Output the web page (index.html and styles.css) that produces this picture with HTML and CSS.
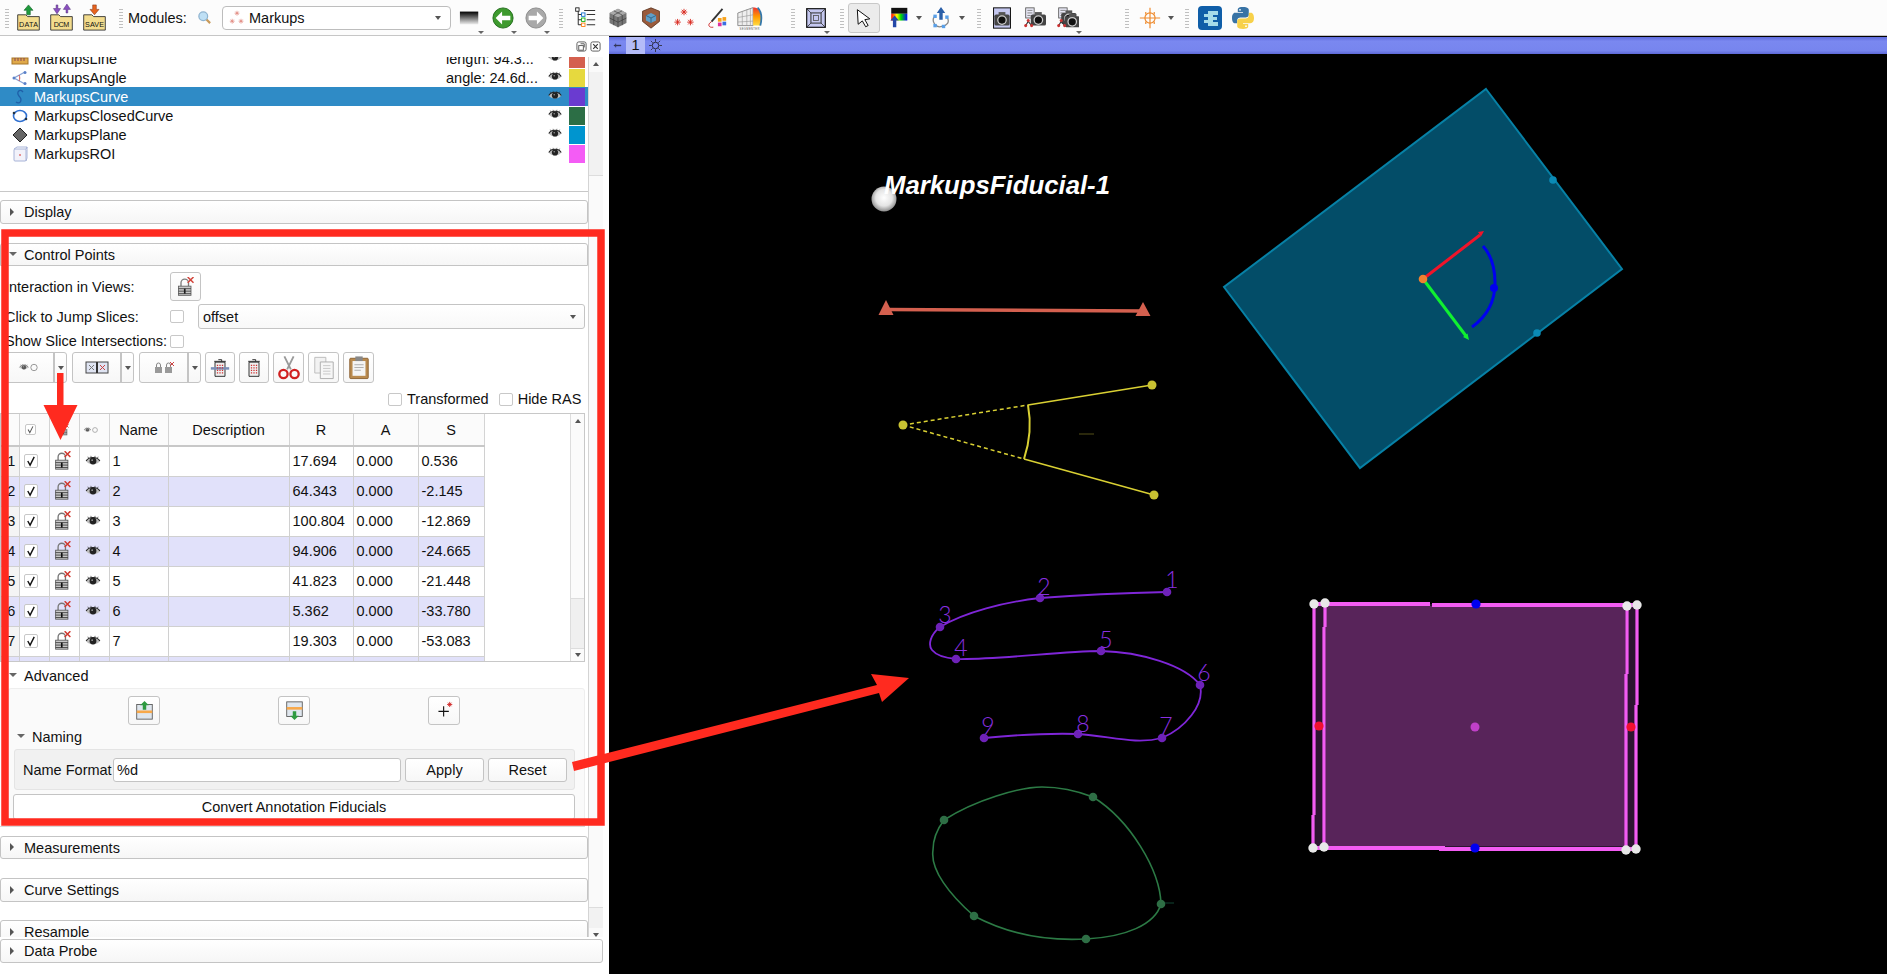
FILE: index.html
```html
<!DOCTYPE html>
<html lang="en">
<head>
    <meta charset="UTF-8">
    <title>3D Slicer - Markups</title>
    <link rel="stylesheet" href="styles.css">
</head>
<body>
    <!-- shared icon shapes -->
    <svg class="defs" width="0" height="0">
        <defs>
            <linearGradient id="gradBlack" x1="0" y1="0" x2="0" y2="1">
                <stop offset="0" stop-color="#000"/><stop offset="1" stop-color="#eee"/>
            </linearGradient>
            <linearGradient id="gradRainbow" x1="0" y1="0" x2="1" y2="0">
                <stop offset="0" stop-color="#f00"/><stop offset=".35" stop-color="#ff0"/><stop offset=".6" stop-color="#0d0"/><stop offset="1" stop-color="#00f"/>
            </linearGradient>
            <linearGradient id="gradMesh" x1="0" y1="0" x2="0" y2="1">
                <stop offset="0" stop-color="#e33"/><stop offset=".5" stop-color="#f90"/><stop offset="1" stop-color="#fd4"/>
            </linearGradient>
            <g id="eye">
                <path d="M1 7C4 2 14 2 17 7C14 12 4 12 1 7z" fill="#bbb"/>
                <path d="M1 7C4 1.500 14 1.500 17 7" fill="none" stroke="#222" stroke-width="1.300"/>
                <path d="M4 4L3 2M7 3L6.500 1M11 3L11.500 1M14 4L15 2" stroke="#333" stroke-width=".8"/>
                <circle cx="9" cy="7" r="4" fill="#222"/>
                <circle cx="8" cy="6" r="1" fill="#999"/>
            </g>
            <g id="lockx">
                <path d="M5 11V7a4.500 4.500 0 0 1 9 0v4" fill="none" stroke="#777" stroke-width="1.600"/>
                <rect x="2" y="11" width="15" height="11" fill="#c8c8c8" stroke="#555"/>
                <path d="M2 14h15M2 17h15M2 20h15" stroke="#333"/>
                <path d="M9.500 14v6" stroke="#111" stroke-width="2"/>
                <path d="M13 0l7 7M20 0l-7 7" stroke="#d03a30" stroke-width="1.800"/>
            </g>
            <g id="check">
                <path d="M3 6.500L5.500 11L10 2" fill="none" stroke="#111" stroke-width="1.500"/>
            </g>
            <g id="camera">
                <rect x="3" y="8" width="18" height="13" rx="2" fill="#444"/>
                <rect x="8" y="5" width="8" height="4" fill="#555"/>
                <circle cx="12" cy="14.500" r="5" fill="#111" stroke="#ccc" stroke-width="1.500"/>
            </g>
            <g id="nodes">
                <path d="M5 17L2 22M5 17L9 22" stroke="#333" stroke-width="1.200"/>
                <circle cx="5" cy="16" r="1.800" fill="#c33"/>
                <circle cx="2" cy="22" r="1.800" fill="#c33"/>
                <circle cx="9" cy="22" r="1.800" fill="#c33"/>
            </g>
            <g id="eyeOff">
                <use href="#eye" transform="translate(1 2.500) scale(.55)" opacity=".75"/>
                <circle cx="16" cy="6.500" r="3.200" fill="none" stroke="#999"/>
            </g>
        </defs>
    </svg>

    <div class="app">
        <header class="toolbar">
            <span class="grip"></span>
            <span class="tool tool-lg">
                <svg viewBox="0 0 30 30"><path d="M15 1l5 6h-3v5h-4V7h-3z" fill="#1f9a3c" stroke="#0c5a20" stroke-width=".6"/><path d="M3 12h9l2 2h13v15H3z" fill="#f3dc8d" stroke="#333"/><text x="15" y="25.500" class="ico-text" textLength="21">DATA</text></svg>
            </span>
            <span class="tool tool-lg">
                <svg viewBox="0 0 30 30"><path d="M9 1v4h-3l4 6 4-6h-3V1zM20 10V6h-3l4-6 4 6h-3v4z" fill="#8a4fc0" stroke="#4d2a70" stroke-width=".5"/><path d="M3 12h9l2 2h13v15H3z" fill="#f3dc8d" stroke="#333"/><text x="15" y="25.500" class="ico-text" textLength="17">DCM</text></svg>
            </span>
            <span class="tool tool-lg">
                <svg viewBox="0 0 30 30"><path d="M13 1h4v5h3l-5 6-5-6h3z" fill="#e8641e" stroke="#803010" stroke-width=".6"/><path d="M3 12h9l2 2h13v15H3z" fill="#f3dc8d" stroke="#333"/><text x="15" y="25.500" class="ico-text" textLength="21">SAVE</text></svg>
            </span>
            <span class="grip grip-mods"></span>
            <span class="mods-label">Modules:</span>
            <span class="tool tool-sm">
                <svg viewBox="0 0 24 24"><path d="M14 14l7 7" stroke="#c89a5a" stroke-width="3.500"/><circle cx="10" cy="10" r="7" fill="#bfe0f5" stroke="#8fb4d0" stroke-width="2"/></svg>
            </span>
            <div class="mods-combo">
                <svg class="mods-icon" viewBox="0 0 20 20"><g stroke="#e0857a" stroke-width=".9"><path d="M10 1v6M7 4h6M8 2l4 4M12 2l-4 4"/><path d="M4 11v6M1 14h6M2 12l4 4M6 12l-4 4"/><path d="M15 11v6M12 14h6M13 12l4 4M17 12l-4 4"/></g></svg>
                <span class="combo-text">Markups</span>
                <span class="tri-down"></span>
            </div>
            <span class="tool tool-gap menu">
                <svg viewBox="0 0 24 24"><rect x="1" y="5" width="20" height="14" fill="url(#gradBlack)"/></svg>
            </span>
            <span class="tool menu">
                <svg viewBox="0 0 24 24"><circle cx="12" cy="12" r="11" fill="#3e9a2e" stroke="#1f6a18"/><path d="M4 12l7-7v4.500h9v5h-9V19z" fill="#fff"/></svg>
            </span>
            <span class="tool menu">
                <svg viewBox="0 0 24 24"><circle cx="12" cy="12" r="11" fill="#a9a9a9" stroke="#888"/><path d="M20 12l-7-7v4.500H4v5h9V19z" fill="#fff"/></svg>
            </span>
            <span class="grip grip-tree"></span>
            <span class="tool">
                <svg viewBox="0 0 26 26"><path d="M5 3v18M5 9h5M5 15h5M5 21h5M12 4h13M15 9h10M15 15h10M15 21h10" stroke="#333" stroke-width="1.200"/><rect x="2" y="1" width="4" height="4" fill="#fff" stroke="#111"/><rect x="9" y="7" width="4" height="4" fill="#fff" stroke="#06c"/><rect x="9" y="13" width="4" height="4" fill="#fff" stroke="#0a0"/><rect x="9" y="19" width="4" height="4" fill="#fff" stroke="#f70"/></svg>
            </span>
            <span class="tool">
                <svg viewBox="0 0 26 26"><path d="M13 2l10 5v12l-10 5-10-5V7z" fill="#777"/><path d="M13 2l10 5-10 5-10-5z" fill="#aaa"/><path d="M13 12v12M8 4.500l10 5M18 4.500l-10 5M8 9.500v12M18 9.500v12M3 13l10 5 10-5" stroke="#333" stroke-width=".7" fill="none"/></svg>
            </span>
            <span class="tool">
                <svg viewBox="0 0 26 26"><path d="M13 1l10 4v12l-10 8-10-8V5z" fill="#9a5b3c" stroke="#5e3622"/><path d="M13 7l6 3v6l-6 3-6-3v-6z" fill="#5f9fc8"/><path d="M13 13l6-3M13 13l-6-3M13 13v6" stroke="#2e5f80"/></svg>
            </span>
            <span class="tool">
                <svg viewBox="0 0 24 24"><g stroke="#d9271e" stroke-width="1"><path d="M12 2v7M8.500 5.500h7M9.500 3l5 5M14.500 3l-5 5"/><path d="M5 13v7M1.500 16.500h7M2.500 14l5 5M7.500 14l-5 5"/><path d="M19 13v7M15.500 16.500h7M16.500 14l5 5M21.500 14l-5 5"/></g></svg>
            </span>
            <span class="tool">
                <svg viewBox="0 0 24 24"><path d="M18 2L6 16" stroke="#333" stroke-width="2"/><path d="M6 16C1 19 3 23 8 22" fill="none" stroke="#c22" stroke-width="1"/><rect x="13" y="12" width="4" height="4" fill="#f7a21b"/><rect x="18" y="11" width="4" height="4" fill="#f7a21b"/><rect x="13" y="17" width="4" height="4" fill="#e0309c"/><rect x="18" y="16" width="4" height="4" fill="#3a6ee0"/></svg>
            </span>
            <span class="tool tool-lg">
                <svg viewBox="0 0 30 30"><path d="M2 10l17-6v20H2z" fill="#eee" stroke="#888"/><path d="M2 15l17-3M2 20l17-1M7 8v16M12 6v18M16 5v19" stroke="#999" stroke-width=".7"/><path d="M19 4C27 2 29 14 27 24h-8z" fill="url(#gradMesh)"/><path d="M24 4c4 4 5 12 3 20" stroke="#37a" stroke-width="2" fill="none"/><text x="15" y="29" class="ico-tiny" textLength="22">SEGMENTER</text></svg>
            </span>
            <span class="grip grip-layout"></span>
            <span class="tool menu">
                <svg viewBox="0 0 26 26"><rect x="2" y="2" width="22" height="22" fill="#c5c8f0" stroke="#111" stroke-width="1.400"/><rect x="7" y="7" width="12" height="12" fill="none" stroke="#333" stroke-width="1.200"/><rect x="10" y="10" width="6" height="6" fill="none" stroke="#555"/><path d="M2 2l5 5M24 2l-5 5M2 24l5-5M24 24l-5-5" stroke="#333"/></svg>
            </span>
            <span class="grip grip-pointer"></span>
            <span class="tool-on">
                <svg viewBox="0 0 24 24"><path d="M4 2l15 11-6 1 4 7-3 1.500-4-7-5 4z" fill="#fff" stroke="#111" stroke-width="1.200"/></svg>
            </span>
            <span class="tool">
                <svg viewBox="0 0 26 26"><rect x="5" y="1" width="19" height="7" fill="#111"/><rect x="5" y="8" width="19" height="8" fill="url(#gradRainbow)"/><path d="M9 10l5 6h-3v8H7v-8H4z" fill="#2448a8"/></svg>
            </span>
            <span class="tri-down tool-drop"></span>
            <span class="tool">
                <svg viewBox="0 0 26 26"><path d="M6 10C0 18 8 25 14 23C20 22 24 18 20 12" fill="none" stroke="#888" stroke-width="1.500"/><path d="M13 0l5 7h-3v8h-4V7H8z" fill="#2a5fa8"/><g fill="#5aa0e8"><rect x="4" y="9" width="4" height="4"/><rect x="18" y="10" width="4" height="4"/><rect x="4" y="20" width="4" height="4"/><rect x="14" y="21" width="4" height="4"/></g></svg>
            </span>
            <span class="tri-down tool-drop"></span>
            <span class="grip grip-cam"></span>
            <span class="tool">
                <svg viewBox="0 0 24 26"><rect x="2" y="1" width="20" height="24" fill="#c5c8f0" stroke="#111" stroke-width="1.200"/><use href="#camera" y="1"/></svg>
            </span>
            <span class="tool">
                <svg viewBox="0 0 26 26"><rect x="2" y="1" width="10" height="12" fill="#e8e8f5" stroke="#555"/><path d="M4 4h6M4 7h6M4 10h4" stroke="#777"/><use href="#camera" x="5" y="1"/><use href="#nodes"/></svg>
            </span>
            <span class="tool menu">
                <svg viewBox="0 0 26 26"><rect x="2" y="1" width="10" height="12" fill="#e8e8f5" stroke="#555"/><path d="M4 4h6M4 7h6M4 10h4" stroke="#777"/><use href="#camera" x="2" y="-1"/><use href="#camera" x="6" y="3"/><use href="#nodes"/></svg>
            </span>
            <span class="grip grip-cross"></span>
            <span class="tool">
                <svg viewBox="0 0 26 26"><g fill="none" stroke="#ee8a2c" stroke-width="1.400"><circle cx="13" cy="13" r="6"/><path d="M13 1v24M1 13h24M8 6v3M18 6v3M8 17v3M18 17v3"/></g></svg>
            </span>
            <span class="tri-down tool-drop"></span>
            <span class="grip grip-ext"></span>
            <span class="tool tool-mid">
                <svg viewBox="0 0 24 24"><rect x="0" y="0" width="24" height="24" rx="4" fill="#0f5ea8"/><path d="M10 5h10v4h-5v2h4v3h-4v2h5v4H10v-3H6v-3h4v-3H6V8h4z" fill="#a5dbe8"/></svg>
            </span>
            <span class="tool tool-mid">
                <svg viewBox="0 0 24 24"><path d="M11.900 1C6.500 1 6.800 3.400 6.800 3.400V6h5.200v.8H4.700S1 6.300 1 11.900s3.200 5.400 3.200 5.400h2v-2.600s-.1-3.200 3.200-3.200h5.400s3 0 3-2.900V3.900S18.300 1 11.900 1z" fill="#3873a5"/><path d="M12.100 23c5.400 0 5.100-2.400 5.100-2.400V18H12v-.8h7.300s3.700.5 3.700-5.100-3.200-5.400-3.200-5.400h-2v2.600s.1 3.200-3.200 3.200H9.200s-3 0-3 2.900v4.700S5.700 23 12.100 23z" fill="#f7d14a"/><circle cx="9" cy="3.800" r=".9" fill="#fff"/><circle cx="15" cy="20.200" r=".9" fill="#fff"/></svg>
            </span>
        </header>

        <main class="workspace">
            <section class="panel">
                <div class="panel-head">
                    <span class="dock-btn">
                        <svg viewBox="0 0 12 12"><rect x="1" y="1" width="10" height="10" rx="2" fill="none" stroke="#555"/><rect x="3" y="5" width="5" height="5" fill="none" stroke="#555"/><path d="M5 3h4v4" fill="none" stroke="#555"/></svg>
                    </span>
                    <span class="dock-btn">
                        <svg viewBox="0 0 12 12"><rect x="1" y="1" width="10" height="10" rx="2" fill="none" stroke="#555"/><path d="M3.500 3.500l5 5M8.500 3.500l-5 5" stroke="#333" stroke-width="1.200"/></svg>
                    </span>
                </div>

                <div class="panel-body">
                    <div class="panel-scroll">
                        <div class="node-list">
                            <div class="node-rows">
                                <div class="node-row">
                                    <svg class="node-icon" viewBox="0 0 18 16"><rect x="1" y="7" width="16" height="6" fill="#e0a94a" stroke="#a87628"/><path d="M4 7v3M7 7v3M10 7v3M13 7v3" stroke="#845"/></svg>
                                    <span class="node-name">MarkupsLine</span>
                                    <span class="node-info">length: 94.3...</span>
                                    <svg class="node-eye" viewBox="0 0 18 14"><use href="#eye"/></svg>
                                    <span class="swatch swatch-line"></span>
                                </div>
                                <div class="node-row">
                                    <svg class="node-icon" viewBox="0 0 18 16"><path d="M14 2L3 8l11 6" fill="none" stroke="#8aa6d8" stroke-width="1.400"/><circle cx="14" cy="2.500" r="1.500" fill="#5a80c8"/><circle cx="3" cy="8" r="1.500" fill="#5a80c8"/><circle cx="14" cy="13.500" r="1.500" fill="#5a80c8"/><path d="M8 5c1 2 1 4 0 6" fill="none" stroke="#d05050"/></svg>
                                    <span class="node-name">MarkupsAngle</span>
                                    <span class="node-info">angle: 24.6d...</span>
                                    <svg class="node-eye" viewBox="0 0 18 14"><use href="#eye"/></svg>
                                    <span class="swatch swatch-angle"></span>
                                </div>
                                <div class="node-row node-row-on">
                                    <svg class="node-icon" viewBox="0 0 18 16"><path d="M12 3C9 -1 5 3 8 7C12 11 9 16 5 13" fill="none" stroke="#1f5fa8" stroke-width="1.300"/></svg>
                                    <span class="node-name">MarkupsCurve</span>
                                    <svg class="node-eye" viewBox="0 0 18 14"><use href="#eye"/></svg>
                                    <span class="swatch swatch-curve"></span>
                                </div>
                                <div class="node-row">
                                    <svg class="node-icon" viewBox="0 0 18 16"><ellipse cx="9" cy="8" rx="6.500" ry="5.500" fill="none" stroke="#2e6fd0" stroke-width="1.600"/><circle cx="3" cy="5" r="1.300" fill="#234"/><circle cx="15" cy="11" r="1.300" fill="#234"/></svg>
                                    <span class="node-name">MarkupsClosedCurve</span>
                                    <svg class="node-eye" viewBox="0 0 18 14"><use href="#eye"/></svg>
                                    <span class="swatch swatch-closed"></span>
                                </div>
                                <div class="node-row">
                                    <svg class="node-icon" viewBox="0 0 18 16"><path d="M9 1l7 7-7 7-7-7z" fill="#666" stroke="#222"/></svg>
                                    <span class="node-name">MarkupsPlane</span>
                                    <svg class="node-eye" viewBox="0 0 18 14"><use href="#eye"/></svg>
                                    <span class="swatch swatch-plane"></span>
                                </div>
                                <div class="node-row">
                                    <svg class="node-icon" viewBox="0 0 18 16"><rect x="3" y="3" width="12" height="12" rx="1" fill="#f2f2fa" stroke="#a8b4d8"/><path d="M3 3l3-2h10l-1 2M15 3l1-2v11l-1 3" fill="none" stroke="#a8b4d8"/><circle cx="9" cy="9" r="1" fill="#e07070"/></svg>
                                    <span class="node-name">MarkupsROI</span>
                                    <svg class="node-eye" viewBox="0 0 18 14"><use href="#eye"/></svg>
                                    <span class="swatch swatch-roi"></span>
                                </div>
                            </div>
                        </div>
                        <div class="splitter"></div>

                        <div class="section-btn"><span class="tri-right"></span>Display</div>

                        <div class="section-btn section-open"><span class="tri-open"></span>Control Points</div>
                        <div class="section-frame">
                            <div class="form-row row-interact">
                                <span class="form-label">Interaction in Views:</span>
                                <span class="push-btn push-lock">
                                    <svg class="lock-icon" viewBox="0 0 22 24"><use href="#lockx"/></svg>
                                </span>
                            </div>
                            <div class="form-row row-jump">
                                <span class="form-label">Click to Jump Slices:</span>
                                <span class="box"></span>
                                <div class="offset-combo">offset<span class="tri-down"></span></div>
                            </div>
                            <div class="form-row row-show">
                                <span class="form-label">Show Slice Intersections:</span>
                                <span class="box"></span>
                            </div>
                            <div class="btn-row">
                                <span class="split">
                                    <svg class="split-icon" viewBox="0 0 24 13"><use href="#eyeOff"/></svg>
                                    <span class="split-arrow"><span class="tri-down"></span></span>
                                </span>
                                <span class="split">
                                    <svg class="split-icon" viewBox="0 0 24 13"><rect x="1" y="1" width="22" height="11" fill="#dfe4f2" stroke="#444"/><path d="M12 1v11" stroke="#333" stroke-width="2"/><path d="M4 4l5 5M9 4l-5 5" stroke="#777"/><path d="M15 4l5 5M20 4l-5 5" stroke="#c44"/></svg>
                                    <span class="split-arrow"><span class="tri-down"></span></span>
                                </span>
                                <span class="split">
                                    <svg class="split-icon" viewBox="0 0 24 13"><rect x="3" y="6" width="7" height="6" fill="#999"/><path d="M4.500 6V4a2 2 0 0 1 4 0v2" fill="none" stroke="#888"/><rect x="13" y="6" width="7" height="6" fill="#999"/><path d="M14.500 6V4a2 2 0 0 1 4 0v2" fill="none" stroke="#888"/><path d="M18 1l4 4M22 1l-4 4" stroke="#c44"/></svg>
                                    <span class="split-arrow"><span class="tri-down"></span></span>
                                </span>
                                <span class="push-btn push-trash">
                                    <svg viewBox="0 0 24 24"><path d="M6 5h12v17H6z" fill="#eee" stroke="#111"/><path d="M5 4h14M10 2h4v2" stroke="#111" fill="none"/><rect x="1" y="11" width="22" height="3" fill="#7a8fb8"/><path d="M9 8v12M12 8v12M15 8v12" stroke="#d03030" stroke-dasharray="1.500 1.500" stroke-width="1.500"/></svg>
                                </span>
                                <span class="push-btn push-trash">
                                    <svg viewBox="0 0 24 24"><path d="M6 5h12v17H6z" fill="#eee" stroke="#111"/><path d="M5 4h14M10 2h4v2" stroke="#111" fill="none"/><path d="M9 8v12M12 8v12M15 8v12" stroke="#d03030" stroke-dasharray="1.500 1.500" stroke-width="1.500"/></svg>
                                </span>
                                <span class="push-btn push-wide">
                                    <svg viewBox="0 0 26 26"><path d="M8 1l7 14M18 1L11 15" stroke="#999" stroke-width="2"/><circle cx="7" cy="20" r="4.500" fill="none" stroke="#d02020" stroke-width="2.500"/><circle cx="19" cy="20" r="4.500" fill="none" stroke="#d02020" stroke-width="2.500"/></svg>
                                </span>
                                <span class="push-btn push-wide">
                                    <svg viewBox="0 0 26 26"><path d="M3 2h12v17H3z" fill="#f2f2f2" stroke="#bbb"/><path d="M9 7h14v18H9z" fill="#f6f6f6" stroke="#aaa"/><path d="M12 11h8M12 14h8M12 17h8M12 20h8" stroke="#c4c4c4"/></svg>
                                </span>
                                <span class="push-btn push-wide">
                                    <svg viewBox="0 0 26 26"><rect x="3" y="3" width="20" height="22" rx="1" fill="#b98a4e" stroke="#8a6030"/><rect x="6" y="6" width="14" height="16" fill="#f4f4f4"/><rect x="9" y="1" width="8" height="5" fill="#888"/><path d="M8 10h10M8 13h10M8 16h7" stroke="#aaa"/></svg>
                                </span>
                            </div>
                            <div class="toggle-row">
                                <span class="box"></span><span class="toggle-text">Transformed</span>
                                <span class="box box-ras"></span><span class="toggle-text">Hide RAS</span>
                            </div>

                            <div class="points-wrap">
                                <table class="points">
                                    <colgroup>
                                        <col class="c-vh"><col class="c-ic"><col class="c-ic"><col class="c-ic">
                                        <col class="c-name"><col class="c-desc"><col class="c-r"><col class="c-a"><col class="c-s">
                                    </colgroup>
                                    <thead>
                                        <tr>
                                            <th></th>
                                            <th><span class="box box-mini"><svg class="chk-mini" viewBox="0 0 13 13"><use href="#check"/></svg></span></th>
                                            <th><svg class="tbl-ico-sm" viewBox="0 0 22 24"><use href="#lockx"/></svg></th>
                                            <th><svg class="tbl-eye-sm" viewBox="0 0 24 13"><use href="#eyeOff"/></svg></th>
                                            <th>Name</th><th>Description</th><th>R</th><th>A</th><th>S</th>
                                        </tr>
                                    </thead>
                                    <tbody>
                                        <tr><td class="vh">1</td><td class="mid"><span class="box box-cell"><svg class="chk" viewBox="0 0 13 13"><use href="#check"/></svg></span></td><td class="mid"><svg class="tbl-lock" viewBox="0 0 22 24"><use href="#lockx"/></svg></td><td class="mid"><svg class="tbl-eye" viewBox="0 0 18 14"><use href="#eye"/></svg></td><td>1</td><td></td><td>17.694</td><td>0.000</td><td>0.536</td></tr>
                                        <tr><td class="vh">2</td><td class="mid"><span class="box box-cell"><svg class="chk" viewBox="0 0 13 13"><use href="#check"/></svg></span></td><td class="mid"><svg class="tbl-lock" viewBox="0 0 22 24"><use href="#lockx"/></svg></td><td class="mid"><svg class="tbl-eye" viewBox="0 0 18 14"><use href="#eye"/></svg></td><td>2</td><td></td><td>64.343</td><td>0.000</td><td>-2.145</td></tr>
                                        <tr><td class="vh">3</td><td class="mid"><span class="box box-cell"><svg class="chk" viewBox="0 0 13 13"><use href="#check"/></svg></span></td><td class="mid"><svg class="tbl-lock" viewBox="0 0 22 24"><use href="#lockx"/></svg></td><td class="mid"><svg class="tbl-eye" viewBox="0 0 18 14"><use href="#eye"/></svg></td><td>3</td><td></td><td>100.804</td><td>0.000</td><td>-12.869</td></tr>
                                        <tr><td class="vh">4</td><td class="mid"><span class="box box-cell"><svg class="chk" viewBox="0 0 13 13"><use href="#check"/></svg></span></td><td class="mid"><svg class="tbl-lock" viewBox="0 0 22 24"><use href="#lockx"/></svg></td><td class="mid"><svg class="tbl-eye" viewBox="0 0 18 14"><use href="#eye"/></svg></td><td>4</td><td></td><td>94.906</td><td>0.000</td><td>-24.665</td></tr>
                                        <tr><td class="vh">5</td><td class="mid"><span class="box box-cell"><svg class="chk" viewBox="0 0 13 13"><use href="#check"/></svg></span></td><td class="mid"><svg class="tbl-lock" viewBox="0 0 22 24"><use href="#lockx"/></svg></td><td class="mid"><svg class="tbl-eye" viewBox="0 0 18 14"><use href="#eye"/></svg></td><td>5</td><td></td><td>41.823</td><td>0.000</td><td>-21.448</td></tr>
                                        <tr><td class="vh">6</td><td class="mid"><span class="box box-cell"><svg class="chk" viewBox="0 0 13 13"><use href="#check"/></svg></span></td><td class="mid"><svg class="tbl-lock" viewBox="0 0 22 24"><use href="#lockx"/></svg></td><td class="mid"><svg class="tbl-eye" viewBox="0 0 18 14"><use href="#eye"/></svg></td><td>6</td><td></td><td>5.362</td><td>0.000</td><td>-33.780</td></tr>
                                        <tr><td class="vh">7</td><td class="mid"><span class="box box-cell"><svg class="chk" viewBox="0 0 13 13"><use href="#check"/></svg></span></td><td class="mid"><svg class="tbl-lock" viewBox="0 0 22 24"><use href="#lockx"/></svg></td><td class="mid"><svg class="tbl-eye" viewBox="0 0 18 14"><use href="#eye"/></svg></td><td>7</td><td></td><td>19.303</td><td>0.000</td><td>-53.083</td></tr>
                                        <tr><td class="vh"></td><td class="mid"></td><td class="mid"><svg class="tbl-lock" viewBox="0 0 22 24"><use href="#lockx"/></svg></td><td class="mid"></td><td></td><td></td><td></td><td></td><td></td></tr>
                                    </tbody>
                                </table>
                                <div class="inner-scroll">
                                    <span class="tri-up"></span>
                                    <span class="inner-groove"></span>
                                    <span class="inner-thumb"></span>
                                    <span class="tri-down"></span>
                                </div>
                            </div>

                            <div class="advanced-title"><span class="tri-open"></span>Advanced</div>
                            <div class="advanced">
                                <div class="adv-btns">
                                    <span class="push-btn push-adv">
                                        <svg viewBox="0 0 22 22"><rect x="2" y="4" width="18" height="17" fill="#dfe6ee" stroke="#555"/><rect x="2" y="11" width="18" height="3" fill="#f7a84a"/><path d="M11 0l5 5h-3v5H9V5H6z" fill="#2e9a40"/></svg>
                                    </span>
                                    <span class="push-btn push-adv">
                                        <svg viewBox="0 0 22 22"><rect x="2" y="1" width="18" height="17" fill="#dfe6ee" stroke="#555"/><rect x="2" y="7" width="18" height="3" fill="#f7a84a"/><path d="M11 22l5-5h-3v-5H9v5H6z" fill="#2e9a40"/></svg>
                                    </span>
                                    <span class="push-btn push-adv">
                                        <svg viewBox="0 0 22 22"><path d="M10 6v12M4 12h12" stroke="#111" stroke-width="1.300"/><path d="M14 4h6M17 1v6M15 2l4 4M19 2l-4 4" stroke="#d02020"/></svg>
                                    </span>
                                </div>
                                <div class="naming-title"><span class="tri-open"></span>Naming</div>
                                <div class="naming">
                                    <span class="name-label">Name Format</span>
                                    <div class="name-input">%d</div>
                                    <span class="flat-btn">Apply</span>
                                    <span class="flat-btn">Reset</span>
                                </div>
                                <div class="convert-btn">Convert Annotation Fiducials</div>
                            </div>
                        </div>

                        <div class="section-btn btn-measure"><span class="tri-right"></span>Measurements</div>
                        <div class="section-btn btn-curve"><span class="tri-right"></span>Curve Settings</div>
                        <div class="section-btn btn-resample"><span class="tri-right"></span>Resample</div>
                    </div>
                    <div class="outer-scroll">
                        <span class="tri-up"></span>
                        <span class="outer-thumb"></span>
                        <span class="outer-gap"></span>
                        <span class="outer-thumb outer-thumb-low"></span>
                        <span class="tri-down"></span>
                    </div>
                </div>
                <div class="section-btn btn-probe"><span class="tri-right"></span>Data Probe</div>
            </section>

            <section class="viewer">
                <div class="view-bar">
                    <svg class="pin" viewBox="0 0 12 12"><path d="M2 6h8" stroke="#223" stroke-width="1.500"/><path d="M4 4v4" stroke="#223"/></svg>
                    <span class="view-tab">1</span>
                    <svg class="view-gear" viewBox="0 0 14 14"><circle cx="7" cy="7" r="3.500" fill="none" stroke="#223"/><path d="M7 0v3M7 11v3M0 7h3M11 7h3M2 2l2 2M10 10l2 2M12 2l-2 2M2 12l2-2" stroke="#334"/></svg>
                </div>
                <svg class="scene" viewBox="609 54 1278 920">
                    <defs>
                        <radialGradient id="sphere" cx=".5" cy=".45" r=".55">
                            <stop offset="0" stop-color="#fff"/><stop offset=".6" stop-color="#e4e4e4"/><stop offset="1" stop-color="#8a8a8a"/>
                        </radialGradient>
                    </defs>

                    <!-- fiducial -->
                    <circle cx="884" cy="199" r="12.500" fill="url(#sphere)"/>
                    <text x="884" y="194" class="fid-label" textLength="226" lengthAdjust="spacingAndGlyphs">MarkupsFiducial-1</text>

                    <!-- line -->
                    <path d="M886 300l7.500 15h-15zM1143 302l7.500 14h-15z" fill="#d4604f"/>
                    <path d="M886 309.500L1143 311" stroke="#d4604f" stroke-width="3.500"/>

                    <!-- angle -->
                    <g stroke="#d9d033" stroke-width="1.500" fill="none">
                        <path d="M1028 405L1152 385M1024 459L1154 495"/>
                        <path d="M903 425L1028 405M903 425L1024 459" stroke-dasharray="4 3"/>
                        <path d="M1028 405Q1033 432 1024 459" stroke-width="2"/>
                    </g>
                    <path d="M1079 434h15" stroke="#555018" stroke-width="1"/>
                    <g fill="#c9c232">
                        <circle cx="903" cy="425" r="4.500"/><circle cx="1152" cy="385" r="4.500"/><circle cx="1154" cy="495" r="4.500"/>
                    </g>

                    <!-- open curve -->
                    <path d="M1167 592C1125 593 1080 595 1040 598C1005 602 965 612 940 627C930 635 928 645 932 650C936 655 945 658 956 659C1000 660 1060 651 1101 651C1140 652 1185 665 1200 685C1205 705 1185 728 1162 738C1135 745 1110 736 1078 734C1045 733 1015 735 984 738" fill="none" stroke="#7f26d8" stroke-width="1.800"/>
                    <g fill="#6e22b8">
                        <circle cx="1167" cy="592" r="4.300"/><circle cx="1040" cy="598" r="4.300"/><circle cx="940" cy="627" r="4.300"/><circle cx="956" cy="659" r="4.300"/><circle cx="1101" cy="651" r="4.300"/><circle cx="1200" cy="685" r="4.300"/><circle cx="1162" cy="738" r="4.300"/><circle cx="1078" cy="734" r="4.300"/><circle cx="984" cy="738" r="4.300"/>
                    </g>
                    <g class="pt-label">
                        <text x="1172" y="588">1</text><text x="1044" y="595">2</text><text x="945" y="623">3</text><text x="961" y="656">4</text><text x="1106" y="648">5</text><text x="1204" y="681">6</text><text x="1166" y="734">7</text><text x="1083" y="732">8</text><text x="988" y="734">9</text>
                    </g>

                    <!-- closed curve -->
                    <path d="M944 820C975 800 1020 787 1042 787C1060 787 1080 792 1093 797C1130 820 1160 870 1161 904C1155 925 1125 937 1086 939C1050 941 1010 935 974 916C950 895 930 870 933 850C933 838 938 828 944 820Z" fill="none" stroke="#2c7a45" stroke-width="1.600"/>
                    <g fill="#2e6e45">
                        <circle cx="944" cy="820" r="4.300"/><circle cx="1093" cy="797" r="4.300"/><circle cx="1161" cy="904" r="4.300"/><circle cx="1086" cy="939" r="4.300"/><circle cx="974" cy="916" r="4.300"/>
                    </g>
                    <path d="M1165 903h9" stroke="#143" stroke-width="1"/>

                    <!-- plane -->
                    <path d="M1486 89L1622 269L1360 468L1224 287Z" fill="#034d68" stroke="#0781a6" stroke-width="2"/>
                    <circle cx="1553" cy="180" r="3.800" fill="#0a8ab5"/>
                    <circle cx="1537" cy="333" r="3.800" fill="#0a8ab5"/>
                    <path d="M1423 279L1480 235" stroke="#f0142a" stroke-width="3"/>
                    <path d="M1423 279L1466 336" stroke="#10f030" stroke-width="3"/>
                    <path d="M1484 231l-6 1 3 4.500z" fill="#f0142a"/>
                    <path d="M1469 340l-1.500-6.500-4.500 3.500z" fill="#10f030"/>
                    <path d="M1483 246C1492 256 1495 270 1495 283C1495 302 1486 317 1472 327" fill="none" stroke="#0000f0" stroke-width="3"/>
                    <circle cx="1494" cy="288" r="4" fill="#0000f0"/>
                    <circle cx="1423" cy="279" r="4.300" fill="#f08030"/>

                    <!-- roi -->
                    <path d="M1314 604H1637V849H1314Z" fill="#2c1430"/>
                    <path d="M1326 606H1625V846H1326Z" fill="#58245a"/>
                    <g fill="none" stroke="#f25cf2" stroke-width="4">
                        <path d="M1314 604H1430M1432 605H1637M1313 848H1445M1439 849H1636"/>
                    </g>
                    <g fill="none" stroke="#f25cf2" stroke-width="3.200">
                        <path d="M1314 604V815M1313 815V848M1325 603V627M1324 627V847M1627 606V674M1626 674V850M1637 605V705M1636 705V849"/>
                    </g>
                    <g fill="#e8e8e8">
                        <circle cx="1314" cy="604" r="4.700"/><circle cx="1325" cy="603" r="4.700"/><circle cx="1627" cy="606" r="4.700"/><circle cx="1637" cy="605" r="4.700"/>
                        <circle cx="1313" cy="848" r="4.700"/><circle cx="1324" cy="847" r="4.700"/><circle cx="1626" cy="850" r="4.700"/><circle cx="1636" cy="849" r="4.700"/>
                    </g>
                    <circle cx="1319" cy="726" r="4.600" fill="#f01030"/>
                    <circle cx="1631" cy="727" r="4.600" fill="#f01030"/>
                    <circle cx="1476" cy="604" r="4.600" fill="#0000f0"/>
                    <circle cx="1475" cy="848" r="4.600" fill="#0000f0"/>
                    <circle cx="1475" cy="727" r="4.500" fill="#c040c8"/>
                </svg>
            </section>
        </main>

        <!-- red callouts drawn over the screenshot -->
        <svg class="callouts" viewBox="0 0 1887 974">
            <rect x="5" y="233" width="596" height="589" fill="none" stroke="#ff2a1f" stroke-width="7.500"/>
            <path d="M57 373h6.500v32h14l-17 35-17-35h13.500z" fill="#ff2a1f"/>
            <path d="M572 762L877 685L871 674L909 678L882 702L879 693L574 771Z" fill="#ff2a1f"/>
        </svg>
    </div>
</body>
</html>
```

FILE: styles.css
```css
html, body {
    margin: 0;
    padding: 0;
    height: 100%;
    background-color: #fff;
    overflow: hidden;
}
body {
    font-family: "Liberation Sans", Arial, sans-serif;
    font-size: 14.5px;
    color: #111;
}
svg {
    display: block;
}
.defs {
    position: absolute;
}
.app {
    position: relative;
    width: 1887px;
    height: 974px;
    display: flex;
    flex-direction: column;
    overflow: hidden;
}
.callouts {
    position: absolute;
    left: 0;
    top: 0;
    width: 1887px;
    height: 974px;
    pointer-events: none;
}

/* toolbar */
.toolbar {
    height: 35px;
    flex: none;
    display: flex;
    align-items: center;
    padding-left: 5px;
    border-bottom: 1px solid #c6c6c6;
    background-color: #fcfcfc;
    box-sizing: content-box;
}
.tool {
    position: relative;
    width: 33px;
    height: 33px;
    flex: none;
    display: flex;
    align-items: center;
    justify-content: center;
}
.tool > svg {
    width: 22px;
    height: 22px;
}
.tool-lg > svg {
    width: 27px;
    height: 27px;
}
.tool-mid > svg {
    width: 24px;
    height: 24px;
}
.tool-sm > svg {
    width: 15px;
    height: 15px;
}
.tool-on {
    width: 30px;
    height: 28px;
    flex: none;
    margin-right: 1px;
    display: flex;
    align-items: center;
    justify-content: center;
    background-color: #ebebeb;
    border: 1px solid #c8c8c8;
    border-radius: 3px;
}
.tool-on > svg {
    width: 20px;
    height: 20px;
}
.menu::after {
    content: "";
    position: absolute;
    right: 2px;
    bottom: 0;
    border-left: 3px solid transparent;
    border-right: 3px solid transparent;
    border-top: 3px solid #666;
}
.grip {
    width: 4px;
    height: 20px;
    flex: none;
    margin-right: 3px;
    background-image: radial-gradient(#bbb 35%, transparent 40%);
    background-size: 2px 3px;
}
.grip-mods { margin: 0 5px 0 8px; }
.grip-tree { margin: 0 5px 0 7px; }
.grip-layout { margin: 0 4px 0 25px; }
.grip-pointer { margin: 0 4px 0 8px; }
.grip-cam { margin: 0 4px 0 10px; }
.grip-cross { margin: 0 4px 0 41px; }
.grip-ext { margin: 0 4px 0 9px; }
.mods-label {
    width: 60px;
    flex: none;
    white-space: nowrap;
}
.mods-combo {
    width: 229px;
    height: 24px;
    flex: none;
    margin-left: 1px;
    display: flex;
    align-items: center;
    box-sizing: border-box;
    padding: 0 9px 0 6px;
    border: 1px solid #bdbdbd;
    border-radius: 4px;
    background-color: #fff;
}
.mods-icon {
    width: 16px;
    height: 16px;
    margin-right: 4px;
}
.combo-text {
    flex: 1;
}
.tool-gap {
    margin-left: 2px;
}
.tool-drop {
    margin: 0 2px;
    flex: none;
}

/* little triangles */
.tri-down {
    width: 0;
    height: 0;
    border-left: 3.5px solid transparent;
    border-right: 3.5px solid transparent;
    border-top: 4px solid #555;
}
.tri-up {
    width: 0;
    height: 0;
    border-left: 3.5px solid transparent;
    border-right: 3.5px solid transparent;
    border-bottom: 4px solid #555;
}
.tri-right {
    display: inline-block;
    width: 0;
    height: 0;
    margin: 0 10px 1px 9px;
    border-top: 4px solid transparent;
    border-bottom: 4px solid transparent;
    border-left: 4px solid #555;
}
.tri-open {
    display: inline-block;
    width: 0;
    height: 0;
    margin: 0 7px 2px 8px;
    border-left: 4px solid transparent;
    border-right: 4px solid transparent;
    border-top: 4px solid #666;
}

/* main split */
.workspace {
    flex: 1;
    display: flex;
    min-height: 0;
}
.panel {
    width: 609px;
    flex: none;
    display: flex;
    flex-direction: column;
    background-color: #fff;
}
.panel-head {
    height: 21px;
    flex: none;
    display: flex;
    justify-content: flex-end;
    align-items: center;
    gap: 3px;
    padding-right: 8px;
    box-sizing: border-box;
}
.dock-btn > svg {
    width: 11px;
    height: 11px;
}
.panel-body {
    height: 880px;
    flex: none;
    display: flex;
}
.panel-scroll {
    width: 589px;
    flex: none;
    box-sizing: border-box;
    overflow: hidden;
    border-right: 1px solid #d4d4d4;
}
.outer-scroll {
    width: 14px;
    flex: none;
    display: flex;
    flex-direction: column;
    align-items: center;
    padding-top: 5px;
    box-sizing: border-box;
    background-color: #fafafa;
}
.outer-thumb {
    width: 14px;
    height: 103px;
    margin-top: 6px;
    background-color: #f2f2f2;
    border-bottom: 1px solid #ddd;
}
.outer-gap {
    flex: 1;
}
.outer-thumb-low {
    height: 20px;
    margin: 0 0 5px;
    border-top: 1px solid #ddd;
    border-bottom: none;
}

/* node list */
.node-list {
    height: 135px;
    overflow: hidden;
    border-bottom: 1px solid #c8c8c8;
    box-sizing: border-box;
}
.node-rows {
    margin-top: -8px;
}
.node-row {
    height: 19px;
    display: flex;
    align-items: center;
    padding-right: 3px;
}
.node-row-on {
    background-color: #2f8bc6;
    color: #fff;
}
.node-icon {
    width: 18px;
    height: 16px;
    margin: 0 5px 0 11px;
    flex: none;
}
.node-name {
    flex: 1;
    white-space: nowrap;
}
.node-info {
    width: 102px;
    flex: none;
    white-space: nowrap;
}
.node-eye {
    width: 14px;
    height: 11px;
    flex: none;
    margin: 0 7px 2px 0;
}
.swatch {
    width: 16px;
    height: 18px;
    flex: none;
}
.swatch-line { background-color: #d4604f; }
.swatch-angle { background-color: #e6d93e; }
.swatch-curve { background-color: #6a3bd0; }
.swatch-closed { background-color: #2c6e45; }
.swatch-plane { background-color: #0095cf; }
.swatch-roi { background-color: #f45cf5; }
.splitter {
    height: 8px;
    background-image: radial-gradient(#ccc 40%, transparent 45%);
    background-size: 2px 2px;
    background-position: center;
    background-repeat: repeat-x;
    background-clip: content-box;
    padding: 3px 280px;
    box-sizing: border-box;
}

/* collapsible section buttons */
.section-btn {
    width: 588px;
    height: 24px;
    box-sizing: border-box;
    display: flex;
    align-items: center;
    border: 1px solid #c4c4c4;
    border-radius: 3px;
    background-image: linear-gradient(#fff, #f6f6f6);
    white-space: nowrap;
}
.section-open {
    margin-top: 19px;
    height: 23px;
    border-radius: 3px 3px 0 0;
}
.section-frame {
    height: 561px;
    box-sizing: border-box;
    border-bottom: 1px solid #d8d8d8;
    width: 585px;
    overflow: hidden;
}
.btn-measure { margin-top: 9px; height: 23px; }
.btn-curve { margin-top: 19px; }
.btn-resample { margin-top: 18px; }
.btn-probe {
    width: 603px;
    margin-top: 2px;
    flex: none;
}

/* control point form */
.form-row {
    display: flex;
    align-items: center;
    padding-left: 5px;
}
.form-label {
    width: 165px;
    flex: none;
    white-space: nowrap;
}
.row-interact {
    height: 29px;
    margin-top: 6px;
}
.row-jump {
    height: 25px;
    margin-top: 3px;
}
.row-show {
    height: 14px;
    margin-top: 5px;
}
.box {
    width: 14px;
    height: 13px;
    flex: none;
    box-sizing: border-box;
    display: inline-block;
    border: 1px solid #c8c8c8;
    border-radius: 2px;
    background-color: #fff;
}
.push-btn {
    height: 31px;
    flex: none;
    display: flex;
    align-items: center;
    justify-content: center;
    box-sizing: border-box;
    border: 1px solid #c4c4c4;
    border-radius: 3px;
    background-image: linear-gradient(#fff, #f7f7f7);
}
.push-btn > svg {
    width: 20px;
    height: 20px;
}
.push-lock {
    width: 31px;
    height: 29px;
}
.lock-icon {
    opacity: .95;
}
.offset-combo {
    width: 387px;
    height: 25px;
    flex: none;
    margin-left: 14px;
    display: flex;
    align-items: center;
    justify-content: space-between;
    box-sizing: border-box;
    padding: 0 8px 0 4px;
    border: 1px solid #c4c4c4;
    border-radius: 3px;
    background-image: linear-gradient(#fff, #f8f8f8);
}
.btn-row {
    display: flex;
    gap: 4px;
    height: 31px;
    margin-top: 4px;
    padding-left: 5px;
}
.split {
    width: 62px;
    height: 31px;
    flex: none;
    display: flex;
    align-items: center;
    box-sizing: border-box;
    border: 1px solid #c4c4c4;
    border-radius: 3px;
    background-image: linear-gradient(#fff, #f7f7f7);
}
.split + .split {
    margin-left: 1px;
}
.split-icon {
    flex: none;
    width: 24px;
    height: 13px;
    margin: 0 auto;
}
.split-arrow {
    width: 13px;
    flex: none;
    height: 100%;
    display: flex;
    align-items: center;
    justify-content: center;
    box-sizing: border-box;
    border-left: 2px solid #c4c4c4;
}
.push-trash { width: 30px; }
.push-wide { width: 31px; }
.push-wide > svg {
    width: 24px;
    height: 25px;
}
.toggle-row {
    display: flex;
    align-items: center;
    height: 14px;
    margin-top: 9px;
    padding-left: 388px;
}
.toggle-text {
    margin-left: 5px;
    white-space: nowrap;
}
.box-ras {
    margin-left: 10px;
}

/* points table */
.points-wrap {
    position: relative;
    display: flex;
    justify-content: space-between;
    width: 585px;
    height: 249px;
    margin-top: 7px;
    box-sizing: border-box;
    border: 1px solid #c8c8c8;
    overflow: hidden;
}
.points {
    width: 484px;
    flex: none;
    margin-left: -1px;
    table-layout: fixed;
    border-collapse: collapse;
    align-self: flex-start;
}
.c-vh { width: 19px; }
.c-ic { width: 30px; }
.c-name { width: 59px; }
.c-desc { width: 121px; }
.c-r { width: 64px; }
.c-a { width: 65px; }
.c-s { width: 66px; }
.points th {
    height: 31px;
    padding: 0;
    font-weight: normal;
    text-align: center;
    background-color: #fbfbfb;
    border-right: 1px solid #d4d4d4;
    border-bottom: 2px solid #c8c8c8;
}
.points td {
    height: 30px;
    box-sizing: border-box;
    padding: 0 3px;
    white-space: nowrap;
    border-right: 1px solid #d0d0d0;
    border-bottom: 1px solid #d0d0d0;
}
.points tbody tr:nth-child(even) td {
    background-color: #e1e1fa;
}
.points tbody td.vh {
    background-color: #f4f4f4;
    text-align: center;
    padding: 0 0 0 4px;
}
.points td.mid {
    padding: 0 3px 0 0;
}
.points th > svg, .points td.mid > svg {
    margin: 0 auto;
}
.points th .tbl-eye-sm {
    margin-left: 3px;
}
.points td .box-cell {
    margin-left: 4px;
}
.box-mini, .box-cell {
    display: flex;
    align-items: center;
    justify-content: center;
}
.box-mini {
    width: 11px;
    height: 11px;
    margin-left: 5px;
}
.box-cell {
    width: 14px;
    height: 14px;
}
.chk {
    width: 12px;
    height: 12px;
    flex: none;
}
.chk-mini {
    width: 9px;
    height: 9px;
    flex: none;
    opacity: .7;
}
.tbl-ico-sm {
    width: 12px;
    height: 12px;
}
.tbl-eye-sm {
    width: 18px;
    height: 10px;
}
.tbl-lock {
    width: 18px;
    height: 20px;
}
.tbl-eye {
    width: 16px;
    height: 12px;
}
.inner-scroll {
    width: 14px;
    height: 100%;
    flex: none;
    display: flex;
    flex-direction: column;
    align-items: center;
    box-sizing: border-box;
    padding: 5px 0 4px;
    background-color: #fbfbfb;
    border-left: 1px solid #ddd;
}
.inner-groove {
    flex: 1;
    width: 100%;
}
.inner-thumb {
    width: 100%;
    height: 49px;
    margin-bottom: 4px;
    background-color: #f0f0f0;
    border-top: 1px solid #ddd;
    border-bottom: 1px solid #ddd;
}

/* advanced */
.advanced-title {
    height: 24px;
    display: flex;
    align-items: center;
    margin-top: 2px;
    padding-left: 1px;
}
.advanced {
    width: 577px;
    height: 140px;
    margin-left: 8px;
    box-sizing: border-box;
    border: 1px solid #eee;
    border-radius: 3px;
    background-color: #fafafa;
}
.adv-btns {
    display: flex;
    gap: 118px;
    margin-top: 7px;
    padding-left: 119px;
}
.push-adv {
    width: 32px;
    height: 29px;
}
.push-adv > svg {
    width: 19px;
    height: 19px;
}
.naming-title {
    height: 24px;
    display: flex;
    align-items: center;
}
.naming {
    width: 561px;
    height: 41px;
    margin-left: 5px;
    display: flex;
    align-items: center;
    gap: 4px;
    box-sizing: border-box;
    padding-left: 8px;
    border: 1px solid #e4e4e4;
    border-radius: 3px;
    background-color: #f1f1f1;
}
.name-label {
    width: 86px;
    flex: none;
    white-space: nowrap;
}
.name-input {
    width: 288px;
    height: 24px;
    flex: none;
    box-sizing: border-box;
    padding: 3px 3px;
    border: 1px solid #c4c4c4;
    border-radius: 3px;
    background-color: #fff;
}
.flat-btn {
    width: 79px;
    height: 24px;
    flex: none;
    display: flex;
    align-items: center;
    justify-content: center;
    box-sizing: border-box;
    border: 1px solid #c4c4c4;
    border-radius: 3px;
    background-image: linear-gradient(#fff, #f7f7f7);
}
.convert-btn {
    width: 562px;
    height: 26px;
    margin: 4px 0 0 4px;
    display: flex;
    align-items: center;
    justify-content: center;
    box-sizing: border-box;
    border: 1px solid #c4c4c4;
    border-radius: 3px;
    background-color: #fff;
}

/* 3D view */
.viewer {
    flex: 1;
    display: flex;
    flex-direction: column;
    min-width: 0;
    background-color: #000;
}
.view-bar {
    height: 17px;
    flex: none;
    margin-top: 1px;
    display: flex;
    align-items: center;
    padding-left: 3px;
    background-image: linear-gradient(#5f6bdc, #7a88f0 25%, #7785ee 80%, #5d69d8);
}
.pin {
    width: 11px;
    height: 11px;
    margin-right: 3px;
    opacity: .8;
}
.view-tab {
    width: 19px;
    height: 17px;
    flex: none;
    text-align: center;
    line-height: 17px;
    background-color: #b4bcf8;
}
.view-gear {
    width: 13px;
    height: 13px;
    margin-left: 4px;
}
.scene {
    flex: 1;
    width: 1278px;
    height: 920px;
}
.ico-text {
    font-size: 8px;
    text-anchor: middle;
    fill: #111;
    font-family: "Liberation Sans", Arial, sans-serif;
}
.ico-tiny {
    font-size: 3px;
    text-anchor: middle;
    fill: #555;
}
.fid-label {
    font-family: "Liberation Sans", Arial, sans-serif;
    font-style: italic;
    font-weight: bold;
    font-size: 26px;
    fill: #fff;
}
.pt-label text {
    font-family: Lato, "Liberation Sans", sans-serif;
    font-weight: 300;
    font-size: 23px;
    text-anchor: middle;
    fill: #8a2fe0;
}
```
